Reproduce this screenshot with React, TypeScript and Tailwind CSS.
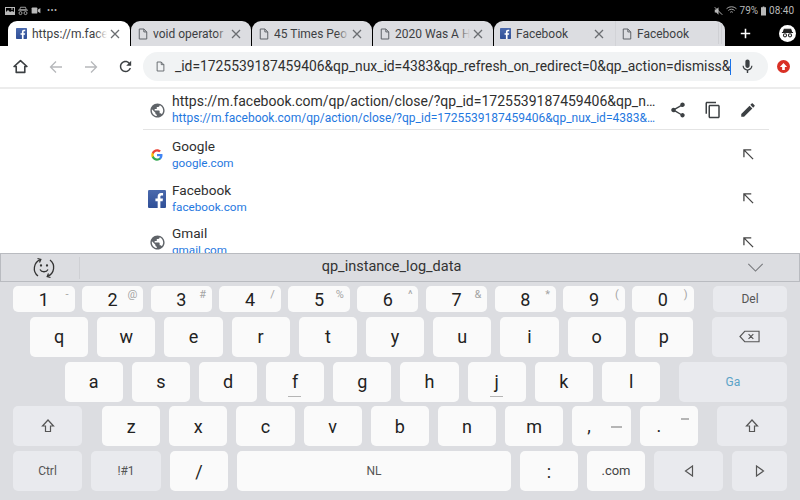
import React from 'react';

const P = {
  globe: 'M12 2C6.48 2 2 6.48 2 12s4.48 10 10 10 10-4.48 10-10S17.52 2 12 2zm-1 17.93c-3.95-.49-7-3.85-7-7.93 0-.62.08-1.21.21-1.79L9 15v1c0 1.1.9 2 2 2v1.93zm6.9-2.54c-.26-.81-1-1.39-1.9-1.39h-1v-3c0-.55-.45-1-1-1H8v-2h2c.55 0 1-.45 1-1V7h2c1.1 0 2-.9 2-2v-.41c2.93 1.19 5 4.06 5 7.41 0 2.08-.8 3.97-2.1 5.39z',
  share: 'M18 16.08c-.76 0-1.44.3-1.96.77L8.91 12.7c.05-.23.09-.46.09-.7s-.04-.47-.09-.7l7.05-4.11c.54.5 1.25.81 2.04.81 1.66 0 3-1.34 3-3s-1.34-3-3-3-3 1.34-3 3c0 .24.04.47.09.7L8.04 9.81C7.5 9.31 6.79 9 6 9c-1.66 0-3 1.34-3 3s1.34 3 3 3c.79 0 1.5-.31 2.04-.81l7.12 4.16c-.05.21-.08.43-.08.65 0 1.61 1.31 2.92 2.92 2.92 1.61 0 2.92-1.31 2.92-2.92s-1.31-2.92-2.92-2.92z',
  copy: 'M16 1H4c-1.1 0-2 .9-2 2v14h2V3h12V1zm3 4H8c-1.1 0-2 .9-2 2v14c0 1.1.9 2 2 2h11c1.1 0 2-.9 2-2V7c0-1.1-.9-2-2-2zm0 16H8V7h11v14z',
  edit: 'M3 17.25V21h3.75L17.81 9.94l-3.75-3.75L3 17.25zM20.71 7.04c.39-.39.39-1.02 0-1.41l-2.34-2.34c-.39-.39-1.02-.39-1.41 0l-1.83 1.83 3.75 3.75 1.83-1.83z',
  mic: 'M12 14c1.66 0 3-1.34 3-3V5c0-1.66-1.34-3-3-3S9 3.34 9 5v6c0 1.66 1.34 3 3 3zm5.3-3c0 3-2.54 5.1-5.3 5.1S6.7 14 6.7 11H5c0 3.41 2.72 6.23 6 6.72V21h2v-3.28c3.28-.48 6-3.3 6-6.72h-1.7z',
  reload: 'M17.65 6.35C16.2 4.9 14.21 4 12 4c-4.42 0-7.99 3.58-7.99 8s3.57 8 7.99 8c3.73 0 6.84-2.55 7.73-6h-2.08c-.82 2.33-3.04 4-5.65 4-3.31 0-6-2.69-6-6s2.69-6 6-6c1.66 0 3.14.69 4.22 1.78L13 11h7V4l-2.35 2.35z',
};

function Fill({ d, className }: { d: string; className?: string }) {
  return (
    <svg viewBox="0 0 24 24" fill="currentColor" className={className}>
      <path d={d} />
    </svg>
  );
}

function PageIcon({ className }: { className?: string }) {
  return (
    <svg viewBox="0 0 12 14" fill="none" stroke="currentColor" strokeWidth="1.2" className={className}>
      <path d="M1.5 1h5.5l3.5 3.5v8.5h-9zM7 1v3.5h3.5" />
    </svg>
  );
}

function CloseIcon() {
  return (
    <svg viewBox="0 0 10 10" fill="none" stroke="#6b6e72" strokeWidth="1.3" className="ml-[3px] h-[10px] w-[10px] shrink-0">
      <path d="M1 1l8 8M9 1l-8 8" />
    </svg>
  );
}

function FbIcon({ className }: { className?: string }) {
  return (
    <svg viewBox="0 0 16 16" className={className}>
      <defs>
        <linearGradient id="fbg" x1="0" y1="0" x2="0" y2="1">
          <stop offset="0" stopColor="#4a69ad" />
          <stop offset="1" stopColor="#2f4f97" />
        </linearGradient>
      </defs>
      <rect width="16" height="16" rx="1" fill="url(#fbg)" />
      <path fill="#fff" d="M11 16V9.9h2l.3-2.4H11V6c0-.7.2-1.2 1.2-1.2h1.2V2.7c-.2 0-.9-.1-1.8-.1-1.8 0-3 1.100-3 3.100v1.800h-2v2.400h2V16z" />
    </svg>
  );
}

function GoogleIcon() {
  return (
    <svg viewBox="0 0 24 24" className="h-[12px] w-[12px]">
      <path fill="#4285F4" d="M23 12.3c0-.8-.1-1.600-.2-2.300H12v4.400h6.200c-.3 1.400-1.100 2.600-2.300 3.400v2.800h3.700c2.100-2 3.400-4.900 3.400-8.300z" />
      <path fill="#34A853" d="M12 23.500c3.100 0 5.700-1 7.600-2.800l-3.700-2.900c-1 .7-2.300 1.100-3.900 1.100-3 0-5.500-2-6.400-4.700H1.800v2.900c1.900 3.800 5.800 6.400 10.200 6.400z" />
      <path fill="#FBBC05" d="M5.600 14.200c-.5-1.400-.5-3 0-4.400V6.900H1.800c-1.600 3.100-1.600 6.900 0 10.100z" />
      <path fill="#EA4335" d="M12 5c1.700 0 3.200.6 4.400 1.700l3.300-3.300C17.700 1.600 15.100.500 12 .500 7.600.500 3.700 3.100 1.800 6.900l3.800 2.900C6.500 7 9 5 12 5z" />
    </svg>
  );
}

function Tab({ icon, title, active, close = true, className, children }: { icon: 'fb' | 'page'; title: string; active?: boolean; close?: boolean; className: string; children?: React.ReactNode }) {
  return (
    <div className={`relative flex h-[25px] shrink-0 items-center rounded-t-[9px] ${active ? 'bg-white' : 'bg-[#dcdde1]'} ${className}`}>
      {icon === 'fb' ? (
        <FbIcon className="h-[11px] w-[11px] shrink-0" />
      ) : (
        <PageIcon className="h-[12px] w-[10px] shrink-0 text-[#5f6368]" />
      )}
      <span className="relative ml-[5px] w-[75px] overflow-hidden whitespace-nowrap text-[12px] leading-[14px] text-[#3c4043]">
        {title}
        <span className={`absolute inset-y-0 right-0 w-[12px] bg-linear-to-r from-transparent ${active ? 'to-white' : 'to-[#dcdde1]'}`} />
      </span>
      {close && <CloseIcon />}
      {children}
    </div>
  );
}

function Suggestion({ icon, title, url, first }: { icon: React.ReactNode; title: string; url: string; first?: boolean }) {
  return (
    <div className={`flex w-[626px] shrink-0 items-center ${first ? 'mb-[3px] h-[41px] border-b border-[#e4e4e4] pt-[2px]' : 'h-[43.7px]'}`}>
      <div className="flex w-[28px] shrink-0 justify-center">{icon}</div>
      <div className="ml-[1px] min-w-0 flex-1">
        <div className={`whitespace-nowrap leading-[17px] text-[#2f2f2f] ${first ? 'text-[14px]' : 'text-[13.6px]'}`}>{title}</div>
        <div className={`whitespace-nowrap leading-[17px] text-[#1f78e0] ${first ? 'text-[12px]' : 'text-[11.7px]'}`}>{url}</div>
      </div>
      {first ? (
        <div className="flex items-center gap-[17px] pr-[12px] text-[#3c4043]">
          <Fill d={P.share} className="h-[18px] w-[18px]" />
          <Fill d={P.copy} className="h-[18px] w-[18px]" />
          <Fill d={P.edit} className="h-[18px] w-[18px]" />
        </div>
      ) : (
        <svg viewBox="0 0 12 12" fill="none" stroke="#444" strokeWidth="1.4" className="mr-[15px] h-[11px] w-[11px]">
          <path d="M1 9V1h8M1 1l10 10" />
        </svg>
      )}
    </div>
  );
}

function Key({ label, hint, w, fn, mark, className = '', text = 'text-[18px] text-[#222]' }: { label?: React.ReactNode; hint?: string; w: string; fn?: boolean; mark?: boolean; className?: string; text?: string }) {
  return (
    <div className={`relative flex h-full shrink-0 items-center justify-center rounded-[5px] ${fn ? 'bg-[#e9eaee]' : 'bg-[#fafafa]'} ${w} ${className} ${text}`}>
      {label}
      {hint && <span className="absolute right-[6px] top-[3px] text-[11px] leading-none text-[#a5a5a5]">{hint}</span>}
      {mark && <span className="absolute bottom-[5px] left-[22px] h-[1px] w-[13px] bg-[#b5b5b5]" />}
    </div>
  );
}

function ShiftIcon() {
  return (
    <svg viewBox="0 0 14 14" fill="none" stroke="#555" strokeWidth="1.2" className="h-[14px] w-[14px]">
      <path d="M7 1L1.500 7H4.500v5.500h5V7h3z" />
    </svg>
  );
}

const digits: [string, string][] = [['1', '-'], ['2', '@'], ['3', '#'], ['4', '/'], ['5', '%'], ['6', '^'], ['7', '&'], ['8', '*'], ['9', '('], ['0', ')']];
const rowQ = ['q', 'w', 'e', 'r', 't', 'y', 'u', 'i', 'o', 'p'];
const rowA = ['a', 's', 'd', 'f', 'g', 'h', 'j', 'k', 'l'];
const rowZ = ['z', 'x', 'c', 'v', 'b', 'n', 'm'];

export default function App() {
  return (
    <div className="flex h-[500px] w-[800px] flex-col overflow-hidden bg-white font-['Roboto',sans-serif]">
      {/* status bar + tabs */}
      <div className="h-[46px] shrink-0 bg-black">
        <div className="flex h-[21px] items-center justify-between pl-[5px] pr-[6px] text-[#b9b9b9]">
          <div className="flex items-center gap-[3px]">
            <svg viewBox="0 0 10 8" className="h-[8px] w-[10px]" fill="currentColor"><path d="M0 0h10v8H0zm1 1v4l2-2 2 2 2-1 2 1V1zm5 .5h2v1H6z" fillRule="evenodd" /></svg>
            <svg viewBox="0 0 12 10" className="h-[10px] w-[10px]" fill="none" stroke="currentColor"><path d="M3 0.500h6l1 3H2zM0 4h12" /><circle cx="3" cy="7.500" r="1.800" /><circle cx="9" cy="7.500" r="1.800" /></svg>
            <svg viewBox="0 0 10 8" className="h-[7px] w-[10px]" fill="currentColor"><rect width="6.500" height="7" y="0.500" rx="1" /><path d="M7 3l3-2v6L7 5z" /></svg>
            <span className="ml-[3px] text-[9px] leading-none tracking-[0.5px]">•••</span>
          </div>
          <div className="flex items-center text-[10px] leading-none">
            <svg viewBox="0 0 12 12" className="h-[10px] w-[9px]" fill="currentColor"><path d="M1 4h2l3-3v10L3 8H1z" /><path d="M1 1l10 10" stroke="currentColor" strokeWidth="1.300" /></svg>
            <svg viewBox="0 0 12 10" className="ml-[3px] h-[9px] w-[11px]" fill="none" stroke="currentColor"><path d="M0.500 3a8 8 0 0 1 11 0M2.500 5a5 5 0 0 1 7 0M4.500 7a2.200 2.200 0 0 1 3 0" /></svg>
            <span className="ml-[3px]">79%</span>
            <svg viewBox="0 0 6 11" className="ml-[3px] h-[10px] w-[5px]" fill="currentColor"><path d="M2 0h2v1h2v10H0V1h2z" /></svg>
            <span className="ml-[3px]">08:40</span>
          </div>
        </div>
        <div className="flex h-[25px] items-end">
          <Tab active icon="fb" title="https://m.face" className="ml-[8px] w-[122px] pl-[8px]" />
          <Tab icon="page" title="void operator" className="ml-[1px] w-[120px] pl-[7px]" />
          <Tab icon="page" title="45 Times Peo" className="ml-[1px] w-[120px] pl-[7px]" />
          <Tab icon="page" title="2020 Was A H" className="ml-[1px] w-[120px] pl-[7px]" />
          <Tab icon="fb" title="Facebook" className="ml-[1px] w-[121px] rounded-tr-none pl-[6px]" />
          <Tab icon="page" close={false} title="Facebook" className="w-[110px] rounded-tl-none border-l border-[#d2d3d7] pl-[6px]">
            <span className="absolute inset-y-[2px] right-[3px] w-[1px] bg-[#cfd0d4]" />
            <span className="absolute inset-y-[2px] right-[6px] w-[1px] bg-[#cfd0d4]" />
          </Tab>
          <svg viewBox="0 0 14 14" fill="none" stroke="#fff" strokeWidth="2" className="mb-[7px] ml-[14.5px] h-[11px] w-[11px]"><path d="M7 1v12M1 7h12" /></svg>
          <div className="mb-[4px] ml-[28px] flex h-[17px] w-[17px] items-center justify-center rounded-full bg-white">
            <svg viewBox="0 0 14 14" className="h-[13px] w-[13px]" fill="none" stroke="#222" strokeWidth="1.100">
              <path d="M3.500 2.500h7l1 3h-9zM1 6h12" fill="#222" />
              <circle cx="4.300" cy="9" r="1.700" />
              <circle cx="9.700" cy="9" r="1.700" />
            </svg>
          </div>
        </div>
      </div>

      {/* toolbar */}
      <div className="flex h-[41px] shrink-0 items-center bg-white">
        <svg viewBox="0 0 14 14" fill="none" stroke="#3c4043" strokeWidth="1.500" className="ml-[13px] h-[15px] w-[15px]"><path d="M7 1.500L1 7h2v5.500h8V7h2z" strokeLinejoin="round" /></svg>
        <svg viewBox="0 0 14 14" fill="none" stroke="#b6b8bb" strokeWidth="1.300" className="ml-[20.5px] h-[14px] w-[14px]"><path d="M13 7H1.500M7 1.500L1.500 7 7 12.500" /></svg>
        <svg viewBox="0 0 14 14" fill="none" stroke="#b6b8bb" strokeWidth="1.300" className="ml-[21.5px] h-[14px] w-[14px]"><path d="M1 7h11.500M7 1.500L12.500 7 7 12.500" /></svg>
        <Fill d={P.reload} className="ml-[18.5px] h-[17px] w-[17px] text-[#3c4043]" />
        <div className="ml-[9.5px] flex h-[29px] w-[625px] shrink-0 items-center rounded-full bg-[#f1f3f4]">
          <PageIcon className="ml-[13px] h-[11px] w-[9px] shrink-0 text-[#5f6368]" />
          <span className="ml-[10px] shrink-0 whitespace-nowrap text-[13.85px] leading-[17px] text-[#2f2f2f]">
            _id=1725539187459406&amp;qp_nux_id=4383&amp;qp_refresh_on_redirect=0&amp;qp_action=dismiss&amp;
          </span>
          <span className="h-[16px] w-[1px] shrink-0 bg-[#1a73e8]" />
          <Fill d={P.mic} className="ml-[8px] h-[17px] w-[17px] shrink-0 text-[#3c4043]" />
        </div>
        <div className="ml-[9px] flex h-[13px] w-[13px] shrink-0 items-center justify-center rounded-full bg-[#d93025]">
          <svg viewBox="0 0 10 10" fill="#fff" className="h-[9px] w-[9px]"><path d="M5 1L9 5.500H6.500V9h-3V5.500H1z" /></svg>
        </div>
      </div>

      {/* suggestions */}
      <div className="flex h-[166px] shrink-0 flex-col overflow-hidden border-t-2 border-[#ececec] pl-[143px]">
        <Suggestion
          first
          icon={<Fill d={P.globe} className="h-[17px] w-[17px] text-[#5f6368]" />}
          title="https://m.facebook.com/qp/action/close/?qp_id=1725539187459406&qp_n…"
          url="https://m.facebook.com/qp/action/close/?qp_id=1725539187459406&qp_nux_id=4383&…"
        />
        <Suggestion icon={<GoogleIcon />} title="Google" url="google.com" />
        <Suggestion icon={<FbIcon className="h-[18px] w-[18px]" />} title="Facebook" url="facebook.com" />
        <Suggestion icon={<Fill d={P.globe} className="h-[17px] w-[17px] text-[#5f6368]" />} title="Gmail" url="gmail.com" />
      </div>

      {/* keyboard */}
      <div className="flex-1 bg-[#dcdde1]">
        <div className="flex h-[29px] items-center border border-[#b9bbc0]">
          <div className="flex h-[22px] w-[79px] items-center justify-center border-r border-[#cfd0d4] pl-[8px]">
            <svg viewBox="0 0 24 24" fill="none" stroke="#333" strokeWidth="1.300" className="h-[24px] w-[24px]">
              <path d="M8.500 3.600A9.500 9.500 0 0 0 6 20M15.500 20.400A9.500 9.500 0 0 0 18 4" />
              <path d="M5.500 2.500l3.300 1L7.500 6.500M18.500 21.500l-3.300-1 1.300-3" />
              <path d="M8 13.500c1.500 3 6.500 3 8 0" />
              <circle cx="9" cy="9.500" r="0.500" fill="#333" />
              <circle cx="15" cy="9.500" r="0.500" fill="#333" />
            </svg>
          </div>
          <div className="flex-1 pr-[44px] text-center text-[14.5px] leading-none text-[#333]">qp_instance_log_data</div>
          <svg viewBox="0 0 18 10" fill="none" stroke="#77797d" strokeWidth="1.200" className="mr-[35px] h-[9px] w-[17px]"><path d="M1 1l8 8 8-8" /></svg>
        </div>

        <div className="flex flex-col gap-[4.75px] pt-[4px]">
          <div className="flex h-[26px] gap-[7.3px] pl-[13px]">
            {digits.map(([d, h]) => (
              <Key key={d} label={d} hint={h} w="w-[61.5px]" />
            ))}
            <Key fn label="Del" w="w-[74px]" className="ml-[12px]" text="text-[12px] text-[#555]" />
          </div>
          <div className="flex h-[40px] gap-[9px] pl-[30px]">
            {rowQ.map((k) => (
              <Key key={k} label={k} w="w-[58.2px]" />
            ))}
            <Key
              fn
              w="w-[75px]"
              className="ml-[10px]"
              label={
                <svg viewBox="0 0 22 13" fill="none" stroke="#555" strokeWidth="1.200" className="h-[13px] w-[21px]">
                  <path d="M6 1h15v11H6L1 6.500zM10 4l5 5M15 4l-5 5" />
                </svg>
              }
            />
          </div>
          <div className="flex h-[40px] gap-[9px] pl-[64.5px]">
            {rowA.map((k) => (
              <Key key={k} label={k} w="w-[58.2px]" mark={k === 'f' || k === 'j'} />
            ))}
            <Key fn label="Ga" w="w-[108px]" className="ml-[9.7px]" text="text-[12px] text-[#5ba3c7]" />
          </div>
          <div className="flex h-[40px] gap-[9px] pl-[13px]">
            <Key fn w="w-[69px]" className="mr-[11px]" label={<ShiftIcon />} />
            {rowZ.map((k) => (
              <Key key={k} label={k} w="w-[58.2px]" />
            ))}
            <Key
              w="w-[58.2px]"
              label={
                <>
                  <span className="absolute left-[15px] top-[6px]">,</span>
                  <span className="absolute left-[39px] top-[20px] h-[1.5px] w-[11px] bg-[#b5b5b5]" />
                </>
              }
            />
            <Key
              w="w-[58.2px]"
              label={
                <>
                  <span className="absolute left-[17px] top-[6px]">.</span>
                  <span className="absolute left-[41px] top-[12px] h-[1.5px] w-[8px] bg-[#b5b5b5]" />
                </>
              }
            />
            <Key fn w="w-[70px]" className="ml-[10.2px]" label={<ShiftIcon />} />
          </div>
          <div className="flex h-[40px] gap-[9px] pl-[13px]">
            <Key fn label="Ctrl" w="w-[69px]" text="text-[12px] text-[#555]" />
            <Key fn label="!#1" w="w-[70px]" text="text-[12px] text-[#555]" />
            <Key label="/" w="w-[58px]" />
            <Key label="NL" w="w-[274px]" text="text-[12px] text-[#555]" />
            <Key label=":" w="w-[58px]" />
            <Key label=".com" w="w-[58px]" text="text-[13px] text-[#444]" />
            <Key fn w="w-[69px]" label={<svg viewBox="0 0 10 12" fill="none" stroke="#555" strokeWidth="1.200" className="h-[12px] w-[10px]"><path d="M8.500 1v10L1.500 6z" /></svg>} />
            <Key fn w="w-[55px]" label={<svg viewBox="0 0 10 12" fill="none" stroke="#555" strokeWidth="1.200" className="h-[12px] w-[10px]"><path d="M1.500 1v10l7-5z" /></svg>} />
          </div>
        </div>
      </div>
    </div>
  );
}
